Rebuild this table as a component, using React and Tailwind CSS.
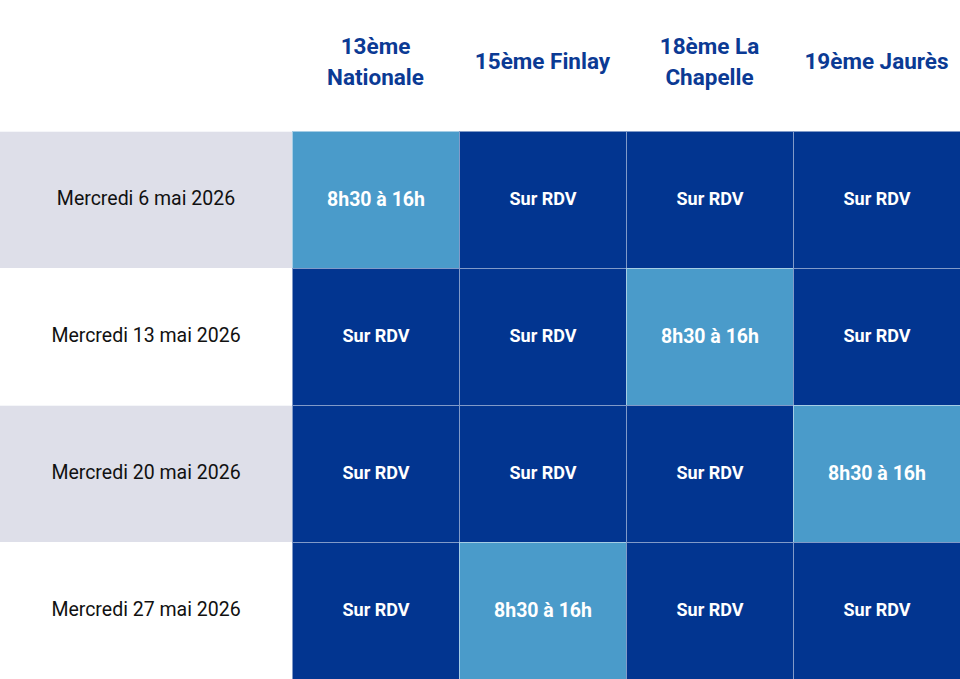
const sites = ["13ème Nationale", "15ème Finlay", "18ème La Chapelle", "19ème Jaurès"];

const rows = [
    {date: "Mercredi 6 mai 2026", open: 0},
    {date: "Mercredi 13 mai 2026", open: 2},
    {date: "Mercredi 20 mai 2026", open: 3},
    {date: "Mercredi 27 mai 2026", open: 1},
];

export default function App() {
    return (
        <div className="w-[960px] h-[679px] bg-white font-['Roboto',sans-serif] grid grid-cols-[292px_repeat(4,1fr)] grid-rows-[131px_repeat(4,137px)] overflow-hidden">
            <div />
            {sites.map((s) => (
                <div key={s} className="flex items-center justify-center px-2 pb-2 text-center text-[22.5px] leading-[31px] font-bold text-[#0b3a94]">
                    {s}
                </div>
            ))}
            {rows.map((r, i) => (
                <Row key={r.date} row={r} shaded={i % 2 === 0} />
            ))}
        </div>
    );
}

function Row({row, shaded}) {
    return (
        <>
            <div className={`flex items-center justify-center pb-0.5 text-[19.5px] text-[#111] border-t border-white/70 ${shaded ? "bg-[#dedfe9]" : "bg-white"}`}>
                {row.date}
            </div>
            {sites.map((s, j) => (
                row.open === j ? (
                    <div key={s} className="flex items-center justify-center bg-[#4a9bca] text-white font-bold text-[19.5px] border-l border-t border-white/50">
                        8h30 à 16h
                    </div>
                ) : (
                    <div key={s} className="flex items-center justify-center pb-1 bg-[#023590] text-white font-bold text-[18px] border-l border-t border-white/50">
                        Sur RDV
                    </div>
                )
            ))}
        </>
    );
}
